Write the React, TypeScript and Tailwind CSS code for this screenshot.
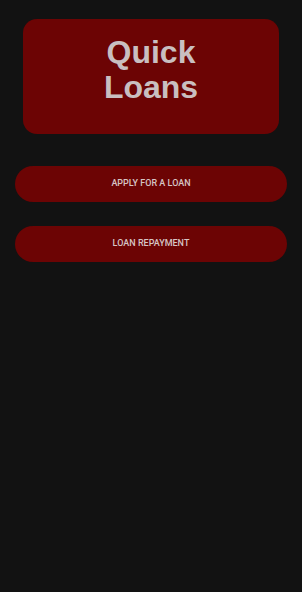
export default function App() {
  return (
    <div className="min-h-[592px] w-full bg-[#121212] px-[15px] pt-[19px]">
      <div className="mx-[8px] flex h-[115px] flex-col items-center justify-center rounded-[14px] bg-[#6c0404] pb-[13px]">
        <h1 className="text-center font-['Liberation_Sans',Arial,sans-serif] text-[32px] font-bold leading-[35px] text-[#c9bfc0]">
          Quick
          <br />
          Loans
        </h1>
      </div>
      <div className="mt-[32px] flex flex-col gap-[24px]">
        <button className="h-[36px] w-full rounded-full bg-[#6c0404] font-['Roboto',sans-serif] text-[9px] font-medium uppercase text-[#d6c5c5]">
          Apply for a loan
        </button>
        <button className="h-[36px] w-full rounded-full bg-[#6c0404] font-['Roboto',sans-serif] text-[9px] font-medium uppercase text-[#d6c5c5]">
          Loan repayment
        </button>
      </div>
    </div>
  );
}
